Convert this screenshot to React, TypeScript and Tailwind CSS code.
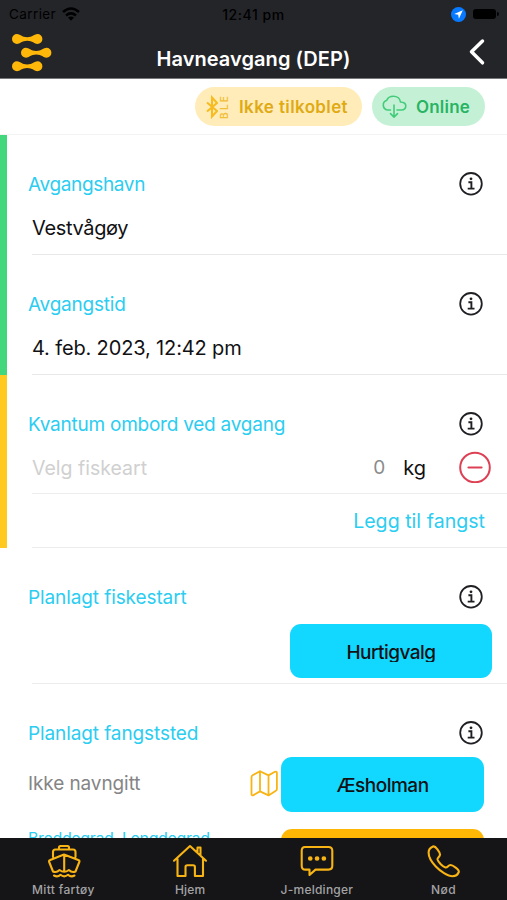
import type { ReactNode } from "react";

function Info() {
  return (
    <svg className="size-6 shrink-0" viewBox="0 0 24 24" fill="none" stroke="#202024" strokeWidth="1.8">
      <circle cx="12" cy="11.8" r="10.8" />
      <path d="M9.4 10.2h3v6.2M8.7 16.6h6.8" strokeWidth="1.9" />
      <circle cx="12" cy="6.8" r="1.4" fill="#202024" stroke="none" />
    </svg>
  );
}

function Logo() {
  const link =
    "M5 0C7.800 0 10 3.200 15.200 3.200S22.600 0 25.400 0a5 5 0 0 1 0 10C22.600 10 20.400 6.800 15.200 6.800S7.800 10 5 10A5 5 0 0 1 5 0Z";
  return (
    <svg className="h-[38px] w-10 shrink-0" viewBox="0 0 40 38" fill="#ffb80a">
      <path d={link} />
      <path d={link} transform="translate(9.000 13.700)" />
      <path d={link} transform="translate(0 27.300)" />
    </svg>
  );
}

function Section({ title, bar, height, tracking, children }: { title: string; bar: string; height: string; tracking: string; children: ReactNode }) {
  return (
    <section className={`flex shrink-0 ${height}`}>
      <div className={`w-[7px] shrink-0 ${bar}`} />
      <div className="flex min-w-0 grow flex-col pt-[37px]">
        <div className="flex h-6 items-center justify-between pl-[21px] pr-6">
          <h2 className={`whitespace-nowrap pt-[2px] text-[19px] leading-6 text-[#2bcdf1] ${tracking}`}>{title}</h2>
          <Info />
        </div>
        {children}
      </div>
    </section>
  );
}

function Tab({ label, tracking, children }: { label: string; tracking: string; children: ReactNode }) {
  return (
    <div className="flex grow basis-0 flex-col items-center pt-[5px]">
      <svg className="h-[35px] w-9 overflow-visible" viewBox="0 0 36 35" fill="none" stroke="#f8b414" strokeWidth="2.1" strokeLinecap="round" strokeLinejoin="round">
        {children}
      </svg>
      <span className={`mt-[4px] whitespace-nowrap text-[12px] font-medium leading-4 text-[#a3a3a5] ${tracking}`}>{label}</span>
    </div>
  );
}

export default function App() {
  return (
    <div className="flex h-[900px] w-[507px] flex-col overflow-hidden bg-white font-['Inter','Liberation_Sans',sans-serif] text-[#111114]">
      <header className="h-[79px] shrink-0 border-b border-[#77787b] bg-[#242529]">
        <div className="grid h-7 grid-cols-3 items-center text-[13px] text-black">
          <div className="flex items-center pl-[9px]">
            <span className="text-[13.5px] tracking-[0.4px]">Carrier</span>
            <svg className="ml-[6px] h-[14px] w-[18px]" viewBox="0 0 18 14" fill="none" stroke="black" strokeWidth="2.600">
              <path d="M1 5Q9-2 17 5M4 8.400Q9 4.300 14 8.400" />
              <path d="M6 10.500Q9 8.300 12 10.500L9 13.800Z" fill="black" stroke="none" />
            </svg>
          </div>
          <span className="text-center text-[14px] font-medium tracking-[0.55px]">12:41 pm</span>
          <div className="flex items-center justify-end pr-[8px]">
            <svg className="size-[15px]" viewBox="0 0 15 15">
              <circle cx="7.500" cy="7.500" r="7.500" fill="#087aff" />
              <path d="M11.800 3.300 3.200 7.100l4 .7.700 4Z" fill="white" />
            </svg>
            <div className="ml-[7px] h-[10px] w-[23px] rounded-[3px] bg-black" />
            <div className="ml-[1px] h-1 w-[2px] rounded-r bg-black" />
          </div>
        </div>
        <div className="grid h-[50px] grid-cols-[100px_1fr_90px] pl-3 pr-[22px]">
          <div className="pt-[5.500px]"><Logo /></div>
          <h1 className="whitespace-nowrap pt-[17px] text-center text-[20px] font-semibold leading-7 tracking-[0.06px] text-white">Havneavgang (DEP)</h1>
          <svg className="ml-auto mt-[10px] h-[28px] w-4" viewBox="0 0 16 28" fill="none" stroke="white" strokeWidth="3.500" strokeLinecap="round" strokeLinejoin="round">
            <path d="M13.500 3 2.500 13.800l11 11" />
          </svg>
        </div>
      </header>

      <div className="flex h-[56px] shrink-0 items-center justify-end gap-[10px] border-b border-[#f3f3f3] pr-[22px]">
        <div className="flex h-[39px] w-[167px] items-center rounded-full bg-[#ffecb8] pl-[11px] text-[#dfaa14]">
          <svg className="h-6 w-[12px]" viewBox="0 0 12 24" fill="none" stroke="#f5bd22" strokeWidth="2.100">
            <path d="M1 7.500 11 16 6 21.500V2.500L11 8 1 16.500" />
          </svg>
          <span className="ml-[1px] w-[11px] rotate-180 text-[10px] font-semibold leading-[11px] tracking-[2.2px] text-[#f1be37] [writing-mode:vertical-rl]">BLE</span>
          <span className="ml-[9px] whitespace-nowrap pt-[2px] text-[17px] font-semibold tracking-[0.38px]">Ikke tilkoblet</span>
        </div>
        <div className="flex h-[39px] w-[113px] items-center rounded-full bg-[#c4f1d5] pl-[9px] text-[#28b463]">
          <svg className="h-[24px] w-[26px]" viewBox="0 0 26 24" fill="none" stroke="#42cc79" strokeWidth="1.600" strokeLinecap="round" strokeLinejoin="round">
            <path d="M9.500 15H6.500a5 5 0 0 1-.7-9.700C6.800 2.500 9.500 1.300 12.500 1.300c3.800 0 6.500 2.500 7 5.700 3.300.1 5.300 1.700 5.300 4.100S22.800 15 20.300 15H16M13 10v11.800M9.500 18.600l3.500 3.500 3.500-3.500" />
          </svg>
          <span className="ml-[9px] pt-[2px] text-[17px] font-semibold tracking-[0.2px]">Online</span>
        </div>
      </div>

      <main className="flex min-h-0 grow flex-col overflow-hidden">
        <Section title="Avgangshavn" bar="bg-[#42d77c]" height="h-[120px]" tracking="tracking-[-0.35px]">
          <div className="ml-[25px] mt-[20px] grow border-b border-[#e8e8e8] text-[20px] leading-6 tracking-[-0.35px]">Vestvågøy</div>
        </Section>
        <Section title="Avgangstid" bar="bg-[#42d77c]" height="h-[120px]" tracking="tracking-[-0.22px]">
          <div className="ml-[25px] mt-[20px] grow border-b border-[#e8e8e8] text-[20px] leading-6 tracking-[-0.14px]">4. feb. 2023, 12:42 pm</div>
        </Section>
        <Section title="Kvantum ombord ved avgang" bar="bg-[#ffc91f]" height="h-[173px]" tracking="tracking-[-0.24px]">
          <div className="ml-[25px] mt-[14px] flex h-[44px] shrink-0 items-start border-b border-[#ededed] pr-4 text-[19.5px] leading-9">
            <span className="text-[#d0d0d0]">Velg fiskeart</span>
            <span className="ml-auto mr-[18px] text-[19px] text-[#8b8b8b]">0</span>
            <span className="mr-[33px] text-[20px]">kg</span>
            <svg className="mt-[1px] size-8" viewBox="0 0 32 32" fill="none" stroke="#dd4054" strokeWidth="2" strokeLinecap="round">
              <circle cx="16" cy="16.500" r="14.800" />
              <path d="M9.500 16.500h13" strokeWidth="2.200" />
            </svg>
          </div>
          <div className="ml-[25px] grow border-b border-[#ededed] pr-[22px] pt-[15px] text-right text-[19.500px] leading-6 tracking-[0.05px] text-[#2bcdf1]">Legg til fangst</div>
        </Section>
        <Section title="Planlagt fiskestart" bar="bg-white" height="h-[136px]" tracking="tracking-[-0.1px]">
          <div className="ml-[25px] flex grow justify-end border-b border-[#ededed] pr-[15px] pt-[15px]">
            <div className="flex h-[54px] w-[202px] items-center justify-center rounded-[11px] bg-[#12d7ff]">
              <span className="h-[21px] overflow-hidden text-[19px] font-medium leading-6 tracking-[-0.52px]">Hurtigvalg</span>
            </div>
          </div>
        </Section>
        <Section title="Planlagt fangststed" bar="bg-white" height="h-[170px]" tracking="tracking-[-0.1px]">
          <div className="flex shrink-0 items-center pl-[21px] pr-[23px] pt-[12px]">
            <span className="mb-[2px] text-[19px] leading-6 tracking-[-0.1px] text-[#858585]">Ikke navngitt</span>
            <svg className="mb-[4px] ml-auto mr-[3px] h-7 w-[28px]" viewBox="0 0 28 28" fill="none" stroke="#f8b414" strokeWidth="1.800" strokeLinejoin="round" strokeLinecap="round">
              <path d="M1.500 8.200Q1.500 6.800 2.600 6.200L10 2.200l8.500 4.200 6.400-3.600q2-.8 2 1.200v16q0 1.200-1 1.800l-7.400 4.600L10 22.400l-6.500 3.700q-2 .8-2-1.200ZM10 2.200v20.200M18.500 6.400v20" />
            </svg>
            <div className="flex h-[55px] w-[203px] items-center justify-center rounded-[11px] bg-[#12d7ff] pt-[3px] text-[19px] font-medium tracking-[-0.48px]">Æsholman</div>
          </div>
          <div className="flex shrink-0 items-start justify-between pl-[21px] pr-[23px] pt-[17px]">
            <span className="-mt-[1px] whitespace-nowrap text-[16px] leading-5 tracking-[-0.36px] text-[#2bcdf1]">Breddegrad, Lengdegrad</span>
            <div className="h-[55px] w-[203px] rounded-[11px] bg-[#ffb706]" />
          </div>
        </Section>
      </main>

      <nav className="flex h-[62px] shrink-0 bg-[#151517]">
        <Tab label="Mitt fartøy" tracking="tracking-[0.35px]">
          <path d="M8 14V9q0-2.500 2.500-2.500h17.500q2.500 0 2.500 2.500v5M14 6V4.500Q14 3 15.500 3h7Q24 3 24 4.500V6M8 28.500 4.200 19q-.6-1.500 1-2L19 11.500 33.300 17q1.600.5 1 2L30.500 28.500M19.200 12v16M8 28.500q3.500 1.500 6.500-1.500 4.700 3.500 9.400 0 3 3 6.600 1.500M9 32.500q3.500 2 6.500-.7 3.700 3 7.500 0 3 2.700 6.500.7" />
        </Tab>
        <Tab label="Hjem" tracking="tracking-[0.2px]">
          <path d="M2 17.700 18 3l16 14.700M5.500 15.500V33H13.500V24q0-1.800 1.800-1.800h5.800q1.800 0 1.800 1.800v9H31V15.500M25.500 8.500V4.500h3v7" />
        </Tab>
        <Tab label="J-meldinger" tracking="tracking-[0.25px]">
          <path d="M6 4h23.500q3.800 0 3.800 3.800v15q0 3.800-3.800 3.800H16.500L10.500 32v-5.400H6.500q-3.800 0-3.800-3.800V7.800Q2.700 4 6 4Z" />
          <path d="M11.200 15.500h.1M18 15.500h.1M24.800 15.500h.1" strokeWidth="4.600" />
        </Tab>
        <Tab label="Nød" tracking="tracking-[0.5px]">
          <path d="M7 3.500C9.500 2.500 14 9.500 14 11.500C14 14 11 14.500 11.500 16.500C12.500 19.500 16.500 23.500 19.500 24.500C21.500 25 22 22 24.500 22C26.500 22 33.500 26.500 32.800 29C31.800 31.500 29 33.200 26.500 33.200C22 33.200 14 28 9.800 23.500C5.500 19 2.600 14 2.600 9.500C2.600 7 4.500 4.500 7 3.500Z" />
        </Tab>
      </nav>
    </div>
  );
}
